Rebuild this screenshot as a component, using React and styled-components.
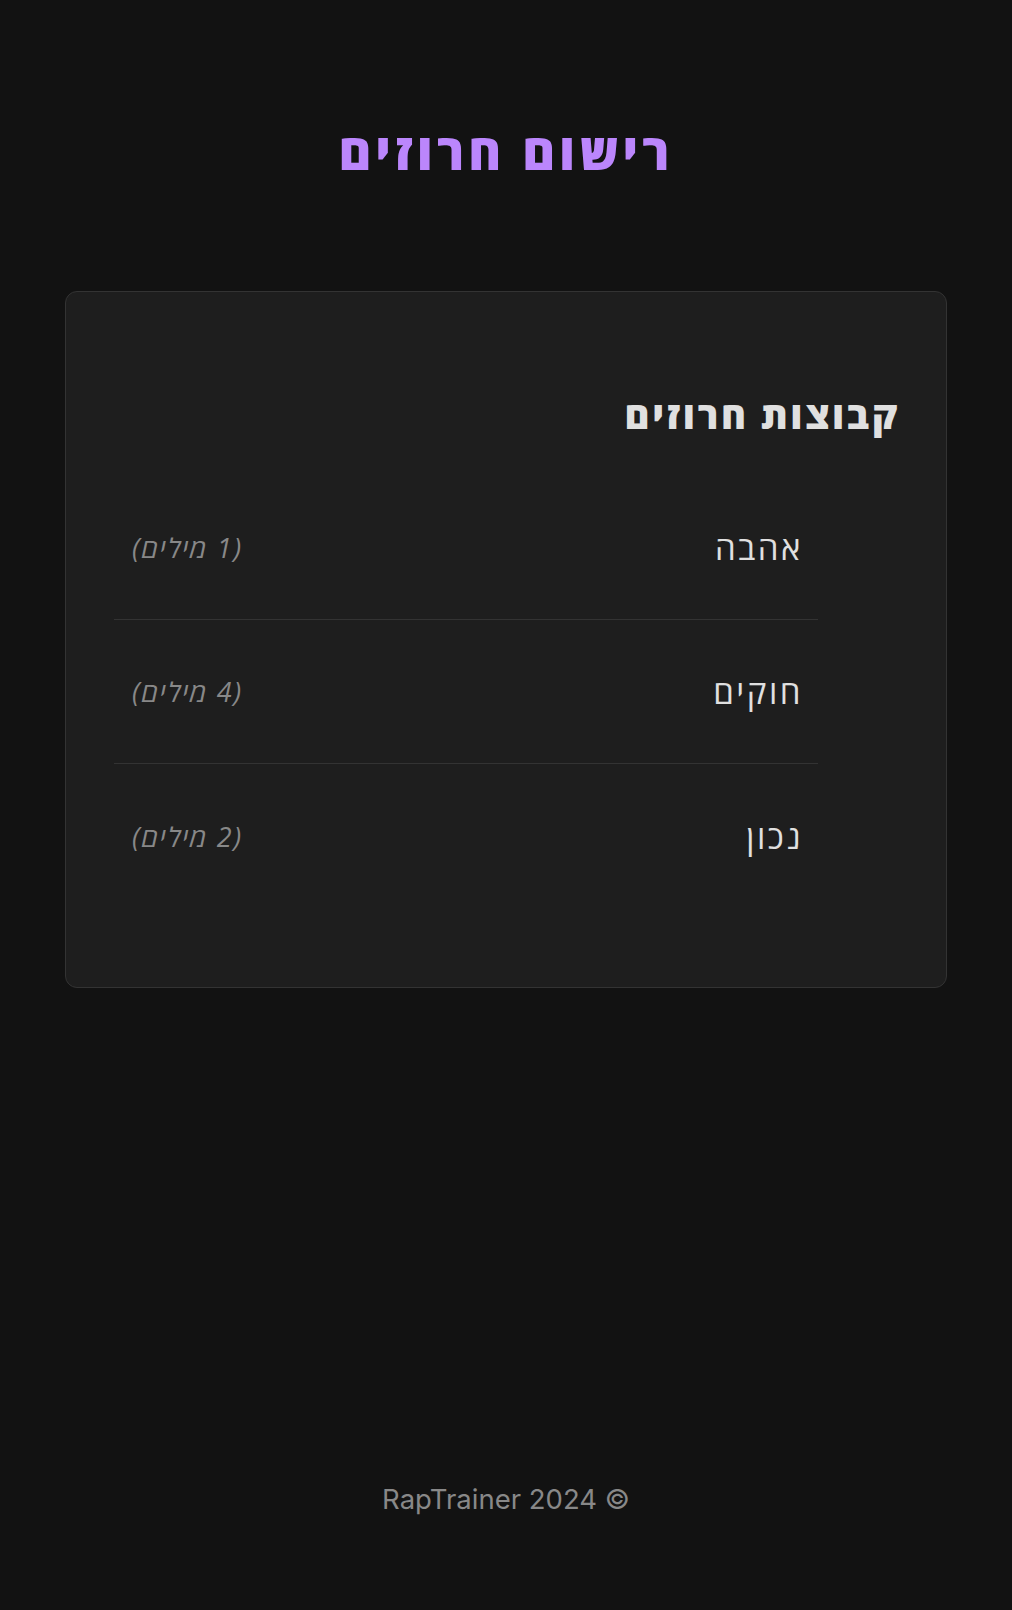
import React from "react";
import styled, { createGlobalStyle } from "styled-components";

const GlobalStyle = createGlobalStyle`
  html, body {
    margin: 0;
    padding: 0;
    background: #121212;
  }
  body {
    font-family: "Open Sans", "Liberation Sans", sans-serif;
    color: #e0e0e0;
  }
  * { box-sizing: border-box; }
`;

const Page = styled.div`
  direction: rtl;
  min-height: 1610px;
  display: flex;
  flex-direction: column;
`;

const Header = styled.header`
  padding-top: 118px;
  display: flex;
  justify-content: center;
`;

const Title = styled.h1`
  margin: 0;
  font-size: 50px;
  line-height: 66px;
  font-weight: 800;
  letter-spacing: 4px;
  color: #bb86fc;
`;

const Main = styled.main`
  padding: 107px 65px 0;
`;

const Card = styled.section`
  background: #1e1e1e;
  border: 1px solid #333;
  border-radius: 12px;
  padding: 48px;
`;

const CardTitle = styled.h2`
  margin: 55px -2px 43px 0;
  font-size: 38px;
  line-height: 38px;
  font-weight: 800;
  letter-spacing: 2.6px;
  color: #e0e0e0;
`;

const List = styled.ul`
  list-style: none;
  margin: 0 0 31px;
  padding: 0 80px 0 0;
`;

const Row = styled.li`
  display: flex;
  justify-content: space-between;
  align-items: center;
  height: 144px;
  padding: 0 18px;
  border-bottom: ${(p) => (p.$last ? "none" : "1px solid #333")};
`;

const Word = styled.span`
  margin-right: -3px;
  font-size: 33px;
  letter-spacing: 2.5px;
  color: #e0e0e0;
`;

const Count = styled.span`
  font-size: 27px;
  font-style: italic;
  letter-spacing: 1.8px;
  color: #888;
`;

const Footer = styled.footer`
  margin-top: auto;
  padding-bottom: 94px;
  text-align: center;
  font-family: Inter, "Liberation Sans", sans-serif;
  font-size: 27.5px;
  color: #888;
`;

const groups = [
  { word: "אהבה", count: 1 },
  { word: "חוקים", count: 4 },
  { word: "נכון", count: 2 },
];

export default function App() {
  return (
    <>
      <GlobalStyle />
      <Page>
        <Header>
          <Title>רישום חרוזים</Title>
        </Header>
        <Main>
          <Card>
            <CardTitle>קבוצות חרוזים</CardTitle>
            <List>
              {groups.map((g, i) => (
                <Row key={g.word} $last={i === groups.length - 1}>
                  <Word>{g.word}</Word>
                  <Count>({g.count} מילים)</Count>
                </Row>
              ))}
            </List>
          </Card>
        </Main>
        <Footer>© RapTrainer 2024</Footer>
      </Page>
    </>
  );
}
